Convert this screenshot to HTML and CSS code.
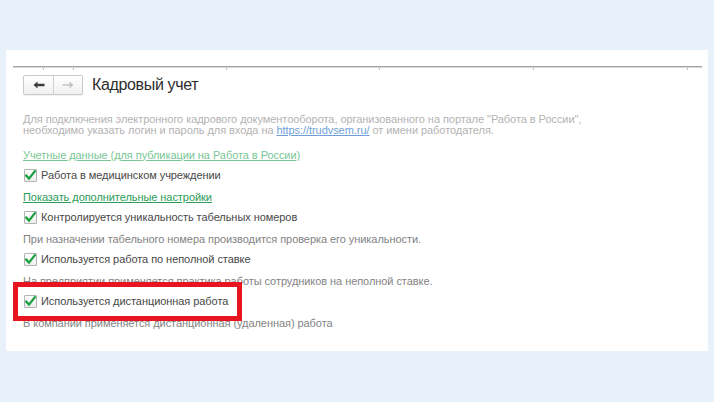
FILE: index.html
```html
<!DOCTYPE html>
<html lang="ru">
<head>
<meta charset="utf-8">
<link rel="stylesheet" href="styles.css">
</head>
<body>
<div class="panel">
  <div class="rule">
    <span class="tick" style="left:30px"></span>
    <span class="tick" style="left:60px"></span>
    <span class="tick" style="left:213px"></span>
    <span class="tick" style="left:366px"></span>
    <span class="tick" style="left:520px"></span>
    <span class="tick" style="left:674px"></span>
  </div>
  <div class="content">
    <div class="header">
      <div class="navgroup">
        <button class="nav back"><svg width="12" height="8" viewBox="0 0 12 8"><path d="M0.5 4 L4.5 0.5 L4.5 2.8 L11.5 2.8 L11.5 5.2 L4.5 5.2 L4.5 7.5 Z" fill="#3c3c3c"/></svg></button>
        <button class="nav fwd"><svg width="12" height="8" viewBox="0 0 12 8"><path d="M11.5 4 L7.5 0.5 L7.5 3.2 L0.5 3.2 L0.5 4.8 L7.5 4.8 L7.5 7.5 Z" fill="#c4c4c4"/></svg></button>
      </div>
      <h1 class="title">Кадровый учет</h1>
    </div>
    <p class="desc">Для подключения электронного кадрового документооборота, организованного на портале "Работа в России",<br>необходимо указать логин и пароль для входа на <a class="url" href="#">https://trudvsem.ru/</a> от имени работодателя.</p>
    <div class="rows">
      <div class="row"><a class="glink faded" href="#">Учетные данные (для публикации на Работа в России)</a></div>
      <div class="row check"><span class="box"><svg width="11" height="11" viewBox="0 0 11 11"><path d="M1.2 5.6 L4 8.6 L9.8 1.2" fill="none" stroke="#17a03d" stroke-width="2.2" stroke-linecap="square"/></svg></span><span class="label">Работа в медицинском учреждении</span></div>
      <div class="row"><a class="glink" href="#">Показать дополнительные настройки</a></div>
      <div class="row check"><span class="box"><svg width="11" height="11" viewBox="0 0 11 11"><path d="M1.2 5.6 L4 8.6 L9.8 1.2" fill="none" stroke="#17a03d" stroke-width="2.2" stroke-linecap="square"/></svg></span><span class="label">Контролируется уникальность табельных номеров</span></div>
      <div class="row note">При назначении табельного номера производится проверка его уникальности.</div>
      <div class="row check"><span class="box"><svg width="11" height="11" viewBox="0 0 11 11"><path d="M1.2 5.6 L4 8.6 L9.8 1.2" fill="none" stroke="#17a03d" stroke-width="2.2" stroke-linecap="square"/></svg></span><span class="label">Используется работа по неполной ставке</span></div>
      <div class="row note">На предприятии применяется практика работы сотрудников на неполной ставке.</div>
      <div class="row check"><span class="box"><svg width="11" height="11" viewBox="0 0 11 11"><path d="M1.2 5.6 L4 8.6 L9.8 1.2" fill="none" stroke="#17a03d" stroke-width="2.2" stroke-linecap="square"/></svg></span><span class="label">Используется дистанционная работа</span></div>
      <div class="row note">В компании применяется дистанционная (удаленная) работа</div>
    </div>
  </div>
</div>
<div class="highlight"></div>
</body>
</html>
```

FILE: styles.css
```css
html, body {
  margin: 0;
  padding: 0;
}
body {
  background: #e8f1fa;
  width: 714px;
  height: 402px;
  overflow: hidden;
  position: relative;
  font-family: "Liberation Sans", Arial, sans-serif;
}
.panel {
  margin: 50px 6px 0 6px;
  height: 301px;
  background: #ffffff;
  padding-top: 16px;
  box-sizing: border-box;
}
.rule {
  position: relative;
  margin: 0 6px 0 7px;
  height: 2px;
  border-top: 1px solid #a6a6a6;
  border-bottom: 1px solid #d6d6d6;
  box-sizing: border-box;
}
.tick {
  position: absolute;
  top: 1px;
  width: 1px;
  height: 2px;
  background: #c0c0c0;
}
.content {
  padding-left: 17px;
}
.header {
  display: flex;
  align-items: center;
  margin-top: 7px;
  height: 20px;
}
.navgroup {
  display: flex;
  height: 20px;
  border: 1px solid #c9c9c9;
  border-radius: 2px;
  box-sizing: border-box;
  box-shadow: 0 1px 1px rgba(0,0,0,0.06);
}
.nav {
  width: 30px;
  height: 18px;
  padding: 0;
  margin: 0;
  border: none;
  background: linear-gradient(#ffffff, #f0f0f0);
  display: flex;
  align-items: center;
  justify-content: center;
}
.nav.back {
  border-right: 1px solid #d2d2d2;
  width: 30px;
}
.nav.fwd {
  width: 28px;
}
.title {
  margin: 0 0 0 9px;
  font-size: 16px;
  letter-spacing: -0.35px;
  font-weight: normal;
  color: #2e2e2e;
  line-height: 20px;
  font-family: "Liberation Sans", Arial, sans-serif;
}
.desc {
  margin: 19px 0 0 0;
  font-size: 11px;
  line-height: 11px;
  letter-spacing: -0.06px;
  color: #b3b3b3;
}
.url {
  color: #6e9fd8;
  text-decoration: underline;
}
.rows {
  margin-top: 8px;
  display: flex;
  flex-direction: column;
}
.row {
  height: 21px;
  display: flex;
  align-items: center;
  font-size: 11px;
  letter-spacing: -0.06px;
}
.row.check {
  height: 21px;
  padding-bottom: 1px;
  box-sizing: border-box;
}
.glink {
  color: #2b9b58;
  text-decoration: underline;
}
.glink.faded {
  color: #79c796;
}
.check .box {
  width: 13px;
  height: 13px;
  box-sizing: border-box;
  border: 1px solid #b3b3b3;
  border-radius: 1px;
  background: linear-gradient(#ffffff, #ededed);
  margin-left: 1px;
  margin-right: 4px;
  display: flex;
  align-items: center;
  justify-content: center;
}
.label {
  color: #484848;
}
.note {
  color: #838383;
}
.highlight {
  position: absolute;
  left: 13px;
  top: 282px;
  width: 229px;
  height: 39px;
  box-sizing: border-box;
  border: 5px solid #e8141f;
}
```
